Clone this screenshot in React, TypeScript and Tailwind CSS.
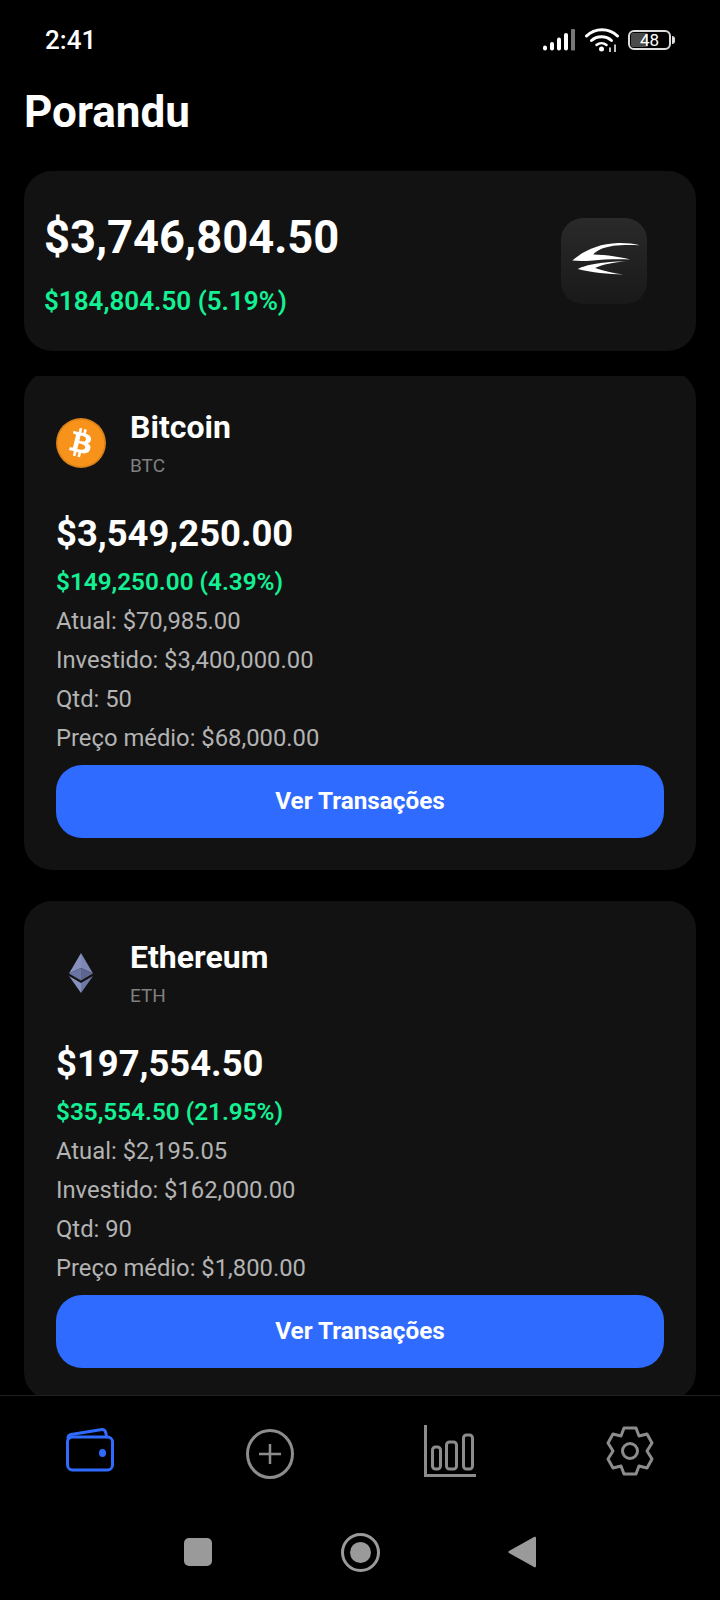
import { FaBitcoin } from "react-icons/fa";

const coins = [
  {
    name: "Bitcoin",
    symbol: "BTC",
    total: "$3,549,250.00",
    gain: "$149,250.00 (4.39%)",
    rows: ["Atual: $70,985.00", "Investido: $3,400,000.00", "Qtd: 50", "Preço médio: $68,000.00"],
  },
  {
    name: "Ethereum",
    symbol: "ETH",
    total: "$197,554.50",
    gain: "$35,554.50 (21.95%)",
    rows: ["Atual: $2,195.05", "Investido: $162,000.00", "Qtd: 90", "Preço médio: $1,800.00"],
  },
];

function BtcLogo() {
  return (
    <div className="relative w-[50px] h-[50px] rounded-full bg-[#d98018]">
      <div className="absolute inset-[10px] bg-white" />
      <FaBitcoin className="absolute inset-[1px] w-[48px] h-[48px] text-[#f7931a]" />
    </div>
  );
}

function EthLogo() {
  return (
    <svg viewBox="0 0 26 40" className="w-[26px] h-[40px]">
      <polygon points="13,0 13,15 25,20.5" fill="#7f88b4" />
      <polygon points="13,0 1,20.5 13,15" fill="#8791bd" />
      <polygon points="13,15 1,20.5 13,27.5" fill="#6b75a3" />
      <polygon points="13,15 25,20.5 13,27.5" fill="#5d6690" />
      <polygon points="1,23 13,40 13,30" fill="#8791bd" />
      <polygon points="25,23 13,40 13,30" fill="#6f79a6" />
    </svg>
  );
}

function BrandLogo() {
  return (
    <div className="w-[86px] h-[86px] rounded-[22px] bg-gradient-to-b from-[#2a2a2a] to-[#191919]">
      <svg viewBox="0 0 86 86" className="w-[86px] h-[86px]" fill="#fff">
        <path d="M11.300 42.600 C22 33 38 25.500 57 25 C65 24.800 72 25.500 79 27.300 C66 26.500 50 26.500 40 31 C36 33 33 35 32.300 36.600 C46 37 60 39 69 41.600 C56 41 42 41.500 32 42.500 C24 43.200 17 43.200 11.300 42.600 Z" />
        <path d="M16.700 51 C26 46.500 40 44 65.700 43.300 C52 44.500 42 46.500 34 50 C44 53 53 55.500 62.300 56.600 C48 56 30 54.500 16.700 51 Z" />
      </svg>
    </div>
  );
}

function StatusIcons() {
  return (
    <div className="flex items-center">
      <svg viewBox="0 0 32 22" className="w-[32px] h-[22px]">
        <rect x="0" y="16.500" width="4" height="5" rx="2" fill="#fff" />
        <rect x="7" y="13" width="4" height="8.500" rx="2" fill="#fff" />
        <rect x="14" y="8.500" width="4" height="13" rx="2" fill="#fff" />
        <rect x="21" y="4" width="4" height="17.500" rx="2" fill="#fff" />
        <rect x="28" y="0" width="4" height="21.500" rx="1" fill="#777" />
      </svg>
      <svg viewBox="0 0 34 24" className="ml-[10px] w-[34px] h-[24px]" fill="none" stroke="#fff" strokeLinecap="round">
        <path d="M1.500 8 C10 -0.500 24 -0.500 32.500 8" strokeWidth="3" />
        <path d="M6.500 12.500 C12 7.500 21 7.500 26.500 12.500" strokeWidth="3" />
        <path d="M11.500 17 C14.500 14.500 18.500 14.500 21.500 17" strokeWidth="2.500" />
        <circle cx="16.500" cy="21" r="2.500" fill="#fff" stroke="none" />
        <path d="M25 20 L25 24 M30 17 L30 24" strokeWidth="1.500" />
      </svg>
      <div className="ml-[9px] relative w-[43px] h-[20px] rounded-[6px] border-2 border-[#dddddd] p-[1px]">
        <div className="w-[17px] h-full rounded-[2px] bg-[#4a4a4a]" />
        <span className="absolute inset-0 flex items-center justify-center text-[17px] leading-none text-white">48</span>
      </div>
      <div className="ml-[1px] w-[3px] h-[8px] rounded-r-full bg-[#dddddd]" />
    </div>
  );
}

function CoinCard({ coin, logo }: { coin: (typeof coins)[number]; logo: React.ReactNode }) {
  return (
    <div className="shrink-0 rounded-[28px] bg-[#121212] px-[32px] pt-[36px] pb-[32px] mb-[31px]">
      <div className="flex items-center">
        <div className="w-[50px] h-[50px] flex items-center justify-center">{logo}</div>
        <div className="ml-[24px]">
          <div className="text-[32px] leading-[40px] font-bold text-white">{coin.name}</div>
          <div className="mt-[7px] text-[19px] leading-[24px] text-[#808080]">{coin.symbol}</div>
        </div>
      </div>
      <div className="mt-[32px] text-[36.4px] leading-[48px] font-bold text-white">{coin.total}</div>
      <div className="mt-[8px] text-[24.3px] leading-[32px] font-semibold text-[#14f195]">{coin.gain}</div>
      {coin.rows.map((row) => (
        <div key={row} className="mt-[7px] text-[23.8px] leading-[32px] text-[#b3b3b3]">
          {row}
        </div>
      ))}
      <div className="mt-[11px] h-[73px] rounded-[26px] bg-[#2f6bff] flex items-center justify-center text-[24.3px] font-bold text-white">
        Ver Transações
      </div>
    </div>
  );
}

export default function App() {
  return (
    <div className="w-[720px] h-[1600px] flex flex-col overflow-hidden bg-black font-['Roboto',sans-serif]">
      <div className="shrink-0 h-[80px] pl-[45px] pr-[45px] flex items-center justify-between">
        <span className="text-[26px] font-medium text-white">2:41</span>
        <StatusIcons />
      </div>
      <h1 className="shrink-0 pl-[24px] text-[44px] leading-[64px] font-bold text-white">Porandu</h1>

      <div className="flex-1 min-h-0 flex flex-col px-[24px] pt-[27px]">
        <div className="shrink-0 h-[180px] rounded-[28px] bg-[#121212] pl-[20px] pr-[49px] flex items-center justify-between mb-[25px]">
          <div className="self-start pt-[39px]">
            <div className="text-[45.300px] leading-[56px] font-bold text-white">$3,746,804.50</div>
            <div className="mt-[19px] text-[26px] leading-[32px] font-semibold text-[#14f195]">$184,804.50 (5.19%)</div>
          </div>
          <BrandLogo />
        </div>
        {/* list is scrolled a bit under the summary card */}
        <div className="flex-1 min-h-0 overflow-hidden">
          <div className="-mt-[5px]">
            <CoinCard coin={coins[0]} logo={<BtcLogo />} />
            <CoinCard coin={coins[1]} logo={<EthLogo />} />
          </div>
        </div>
      </div>

      <nav className="shrink-0 h-[205px] border-t border-[#1f1f1f] flex flex-col">
        <div className="h-[114px] flex items-start">
          <div className="w-[180px] pt-[32px] flex justify-center">
            <svg viewBox="0 0 48 44" className="w-[48px] h-[44px]" fill="none" stroke="#2f6bff" strokeWidth="3" strokeLinejoin="round" strokeLinecap="round">
              <path d="M2 10 C2 8 3 7 5 6.500 L36 1.500 C38.500 1.200 40 3 40.500 9" />
              <rect x="1.500" y="9" width="45" height="33" rx="5" />
              <ellipse cx="36.500" cy="25" rx="3.500" ry="4" fill="#2f6bff" stroke="none" />
            </svg>
          </div>
          <div className="w-[180px] pt-[33px] flex justify-center">
            <svg viewBox="0 0 48 50" className="w-[48px] h-[50px]" fill="none" stroke="#8c8c8c" strokeWidth="3">
              <ellipse cx="24" cy="25" rx="22.500" ry="23.500" />
              <path d="M24 15 V35 M13 25 H35" strokeWidth="2.500" />
            </svg>
          </div>
          <div className="w-[180px] pt-[29px] flex justify-center">
            <svg viewBox="0 0 52 52" className="w-[52px] h-[52px]" fill="none" stroke="#8c8c8c" strokeWidth="3">
              <path d="M1.500 0 V50.500 H52" />
              <rect x="8.500" y="22" width="8" height="22" rx="3" />
              <rect x="22.500" y="17" width="10" height="27" rx="3" />
              <rect x="39.500" y="10" width="9" height="34" rx="3" />
            </svg>
          </div>
          <div className="w-[180px] pt-[30px] flex justify-center">
            <svg viewBox="0 0 48 50" className="w-[48px] h-[50px]" fill="none" stroke="#8c8c8c" strokeWidth="3" strokeLinejoin="round">
              <path d="M18 2 H30 L33 10 L41 8 L46 17 L41 25 L46 33 L41 42 L33 40 L30 48 H18 L15 40 L7 42 L2 33 L7 25 L2 17 L7 8 L15 10 Z" />
              <circle cx="24" cy="25" r="7.500" />
            </svg>
          </div>
        </div>
        <div className="flex-1 flex items-center justify-center pb-[6px]">
          <div className="w-[28px] h-[28px] rounded-[5px] bg-[#9a9a9a]" />
          <div className="ml-[129px] w-[39px] h-[39px] rounded-full border-[3px] border-[#9a9a9a] flex items-center justify-center">
            <div className="w-[21px] h-[21px] rounded-full bg-[#9a9a9a]" />
          </div>
          <svg viewBox="0 0 28 32" className="ml-[128px] w-[28px] h-[32px]">
            <path d="M26 1 C27 0.500 28 1 28 2 V30 C28 31 27 32 26 31 L1 17 C0 16.500 0 15.500 1 15 Z" fill="#9a9a9a" />
          </svg>
        </div>
      </nav>
    </div>
  );
}
